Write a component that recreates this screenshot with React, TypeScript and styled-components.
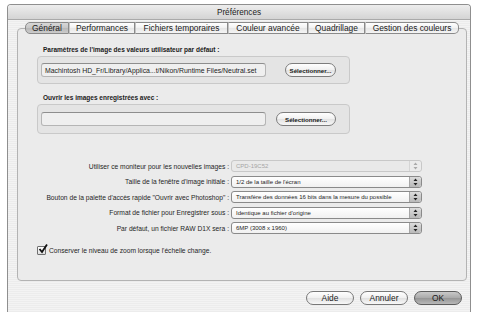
import styled, { createGlobalStyle, css } from "styled-components";

const GlobalStyle = createGlobalStyle`
  html, body {
    margin: 0;
    background: #ffffff;
  }
  body {
    font-family: "Liberation Sans", Arial, sans-serif;
    color: #1a1a1a;
  }
`;

const tabs = [
  { label: "Général", width: 44 },
  { label: "Performances", width: 66 },
  { label: "Fichiers temporaires", width: 93 },
  { label: "Couleur avancée", width: 80 },
  { label: "Quadrillage", width: 57 },
  { label: "Gestion des couleurs", width: 94 },
];

const popups = [
  {
    label: "Utiliser ce moniteur pour les nouvelles images :",
    value: "CPD-19C52",
    disabled: true,
  },
  { label: "Taille de la fenêtre d'image initiale :", value: "1/2 de la taille de l'écran" },
  {
    label: "Bouton de la palette d'accès rapide \"Ouvrir avec Photoshop\" :",
    value: "Transfère des données 16 bits dans la mesure du possible",
  },
  { label: "Format de fichier pour Enregistrer sous :", value: "Identique au fichier d'origine" },
  { label: "Par défaut, un fichier RAW D1X sera :", value: "6MP (3008 x 1960)" },
];

export default function App() {
  return (
    <Page>
      <GlobalStyle />
      <Window>
        <TitleBar>Préférences</TitleBar>
        <Body>
          <TabRow>
            {tabs.map((t, i) => (
              <Tab
                key={t.label}
                $selected={i === 0}
                $first={i === 0}
                $last={i === tabs.length - 1}
                style={{ width: t.width }}
              >
                {t.label}
              </Tab>
            ))}
          </TabRow>
          <Panel>
            <GroupLabel>Paramètres de l'image des valeurs utilisateur par défaut :</GroupLabel>
            <GroupBox>
              <PathField>
                Machintosh HD_Fr/Library/Applica...t/Nikon/Runtime Files/Neutral.set
              </PathField>
              <PillButton $width={51}>Sélectionner...</PillButton>
            </GroupBox>

            <GroupLabel $gap={9}>Ouvrir les images enregistrées avec :</GroupLabel>
            <GroupBox $tall>
              <PathField />
              <PillButton $width={60}>Sélectionner...</PillButton>
            </GroupBox>

            <PopupGrid>
              {popups.map((p) => (
                <PopupRow key={p.label}>
                  <RowLabel>{p.label}</RowLabel>
                  <Popup $disabled={p.disabled}>
                    <span>{p.value}</span>
                    <Arrows $disabled={p.disabled}>
                      <svg width="5" height="8" viewBox="0 0 5 8">
                        <path d="M2.5 0.5 L4.5 3 L0.5 3 Z M0.5 5 L4.5 5 L2.5 7.5 Z" fill={p.disabled ? "#aaa" : "#222"} />
                      </svg>
                    </Arrows>
                  </Popup>
                </PopupRow>
              ))}
            </PopupGrid>

            <CheckRow>
              <CheckBox>
                <svg width="10" height="10" viewBox="0 0 10 10">
                  <path d="M1.5 5 L4 8 L9 0.5" fill="none" stroke="#111" strokeWidth="1.8" />
                </svg>
              </CheckBox>
              Conserver le niveau de zoom lorsque l'échelle change.
            </CheckRow>
          </Panel>
          <Footer>
            <DialogButton>Aide</DialogButton>
            <DialogButton>Annuler</DialogButton>
            <DialogButton $default>OK</DialogButton>
          </Footer>
        </Body>
      </Window>
    </Page>
  );
}

const Page = styled.div`
  padding: 4px 0 0 7px;
  width: 479px;
  height: 312px;
  box-sizing: border-box;
  overflow: hidden;
`;

const Window = styled.div`
  width: 464px;
  height: 308px;
  box-sizing: border-box;
  border: 1px solid #8f8f8f;
  border-bottom: none;
  border-radius: 4px 4px 0 0;
  display: flex;
  flex-direction: column;
  overflow: hidden;
`;

const TitleBar = styled.div`
  height: 14px;
  flex: none;
  display: flex;
  align-items: center;
  justify-content: center;
  font-size: 8.2px;
  color: #222;
  background: linear-gradient(#ededed, #d4d4d4);
  border-bottom: 1px solid #a9a9a9;
`;

const Body = styled.div`
  flex: 1;
  display: flex;
  flex-direction: column;
  padding: 2px 3px 0 9px;
  background: repeating-linear-gradient(#f3f3f3 0 1px, #ececec 1px 2px);
`;

const TabRow = styled.div`
  display: flex;
  justify-content: center;
  height: 12px;
  position: relative;
  z-index: 1;
`;

const Tab = styled.div<{ $selected?: boolean; $first?: boolean; $last?: boolean }>`
  box-sizing: border-box;
  height: 12px;
  display: flex;
  align-items: center;
  justify-content: center;
  font-size: 8.4px;
  white-space: nowrap;
  color: #1a1a1a;
  border: 1px solid #8a8a8a;
  border-left: 1px solid #c4c4c4;
  background: linear-gradient(#ffffff, #f1f1f1 50%, #e6e6e6 51%, #f4f4f4);
  ${(p) =>
    p.$first &&
    css`
      border-left: 1px solid #8a8a8a;
      border-radius: 5px 0 0 5px;
    `}
  ${(p) =>
    p.$last &&
    css`
      border-radius: 0 5px 5px 0;
    `}
  ${(p) =>
    p.$selected &&
    css`
      background: linear-gradient(#d8d8d8, #c6c6c6 50%, #b8b8b8 51%, #cbcbcb);
    `}
`;

const Panel = styled.div`
  margin-top: -6px;
  height: 253px;
  box-sizing: border-box;
  border: 1px solid #b3b3b3;
  border-radius: 4px;
  background: #ebebeb;
  padding: 16px 0 0 19px;
  display: flex;
  flex-direction: column;
`;

const GroupLabel = styled.div<{ $gap?: number }>`
  font-size: 6.5px;
  font-weight: bold;
  padding-left: 6px;
  margin-top: ${(p) => p.$gap ?? 0}px;
  height: 9px;
  line-height: 9px;
`;

const GroupBox = styled.div<{ $tall?: boolean }>`
  width: 313px;
  height: ${(p) => (p.$tall ? 30 : 28)}px;
  box-sizing: border-box;
  margin-top: 2px;
  border: 1px solid #c9c9c9;
  border-radius: 4px;
  background: #e4e4e4;
  display: flex;
  align-items: center;
  justify-content: space-between;
  padding: 0 13px 0 3px;
`;

const PathField = styled.div`
  width: 225px;
  height: 14px;
  box-sizing: border-box;
  border: 1px solid #b5b5b5;
  border-top-color: #8e8e8e;
  border-radius: 3px;
  background: #efefef;
  font-size: 6.9px;
  padding-left: 3px;
  display: flex;
  align-items: center;
  white-space: nowrap;
  overflow: hidden;
  color: #222;
`;

const PillButton = styled.div<{ $width: number }>`
  width: ${(p) => p.$width}px;
  height: 14px;
  box-sizing: border-box;
  border: 1px solid #7d7d7d;
  border-radius: 7px;
  background: linear-gradient(#ffffff, #f0f0f0 50%, #e2e2e2 51%, #f7f7f7);
  font-size: 6.2px;
  font-weight: bold;
  display: flex;
  align-items: center;
  justify-content: center;
  white-space: nowrap;
`;

const PopupGrid = styled.div`
  margin-top: 26px;
  display: flex;
  flex-direction: column;
  gap: 3.5px;
  padding-right: 44px;
  margin-left: -19px;
`;

const PopupRow = styled.div`
  display: grid;
  grid-template-columns: 1fr 191px;
  column-gap: 2px;
  align-items: center;
  height: 12px;
`;

const RowLabel = styled.div`
  text-align: right;
  font-size: 6.7px;
  white-space: nowrap;
  color: #1f1f1f;
`;

const Popup = styled.div<{ $disabled?: boolean }>`
  height: 12px;
  box-sizing: border-box;
  border: 1px solid ${(p) => (p.$disabled ? "#c8c8c8" : "#8a8a8a")};
  border-radius: 3px;
  background: ${(p) => (p.$disabled ? "#e9e9e9" : "linear-gradient(#ffffff, #f1f1f1)")};
  font-size: 6px;
  color: ${(p) => (p.$disabled ? "#a5a5a5" : "#1f1f1f")};
  display: flex;
  align-items: center;
  justify-content: space-between;
  padding-left: 4px;
  white-space: nowrap;
  overflow: hidden;
`;

const Arrows = styled.div<{ $disabled?: boolean }>`
  width: 11px;
  height: 100%;
  display: flex;
  align-items: center;
  justify-content: center;
  border-left: 1px solid ${(p) => (p.$disabled ? "#d5d5d5" : "#a5a5a5")};
  background: ${(p) => (p.$disabled ? "#ececec" : "linear-gradient(#dcdcdc, #b9b9b9)")};
  border-radius: 0 2px 2px 0;
`;

const CheckRow = styled.div`
  margin-top: 12px;
  display: flex;
  align-items: center;
  gap: 3px;
  font-size: 6.7px;
  color: #1f1f1f;
`;

const CheckBox = styled.div`
  width: 9px;
  height: 9px;
  box-sizing: border-box;
  border: 1px solid #707070;
  border-radius: 1px;
  background: linear-gradient(#ffffff, #dedede);
  position: relative;
  svg {
    position: absolute;
    left: 0;
    top: -3px;
  }
`;

const Footer = styled.div`
  display: flex;
  justify-content: flex-end;
  gap: 6px;
  padding: 10px 5px 0 0;
`;

const DialogButton = styled.div<{ $default?: boolean }>`
  width: 48px;
  height: 14px;
  box-sizing: border-box;
  border: 1px solid #787878;
  border-radius: 7px;
  font-size: 8.4px;
  display: flex;
  align-items: center;
  justify-content: center;
  background: linear-gradient(#ffffff, #f0f0f0 50%, #e1e1e1 51%, #f8f8f8);
  ${(p) =>
    p.$default &&
    css`
      border-color: #5d5d5d;
      background: linear-gradient(#c9c9c9, #a9a9a9 50%, #959595 51%, #b8b8b8);
    `}
`;
